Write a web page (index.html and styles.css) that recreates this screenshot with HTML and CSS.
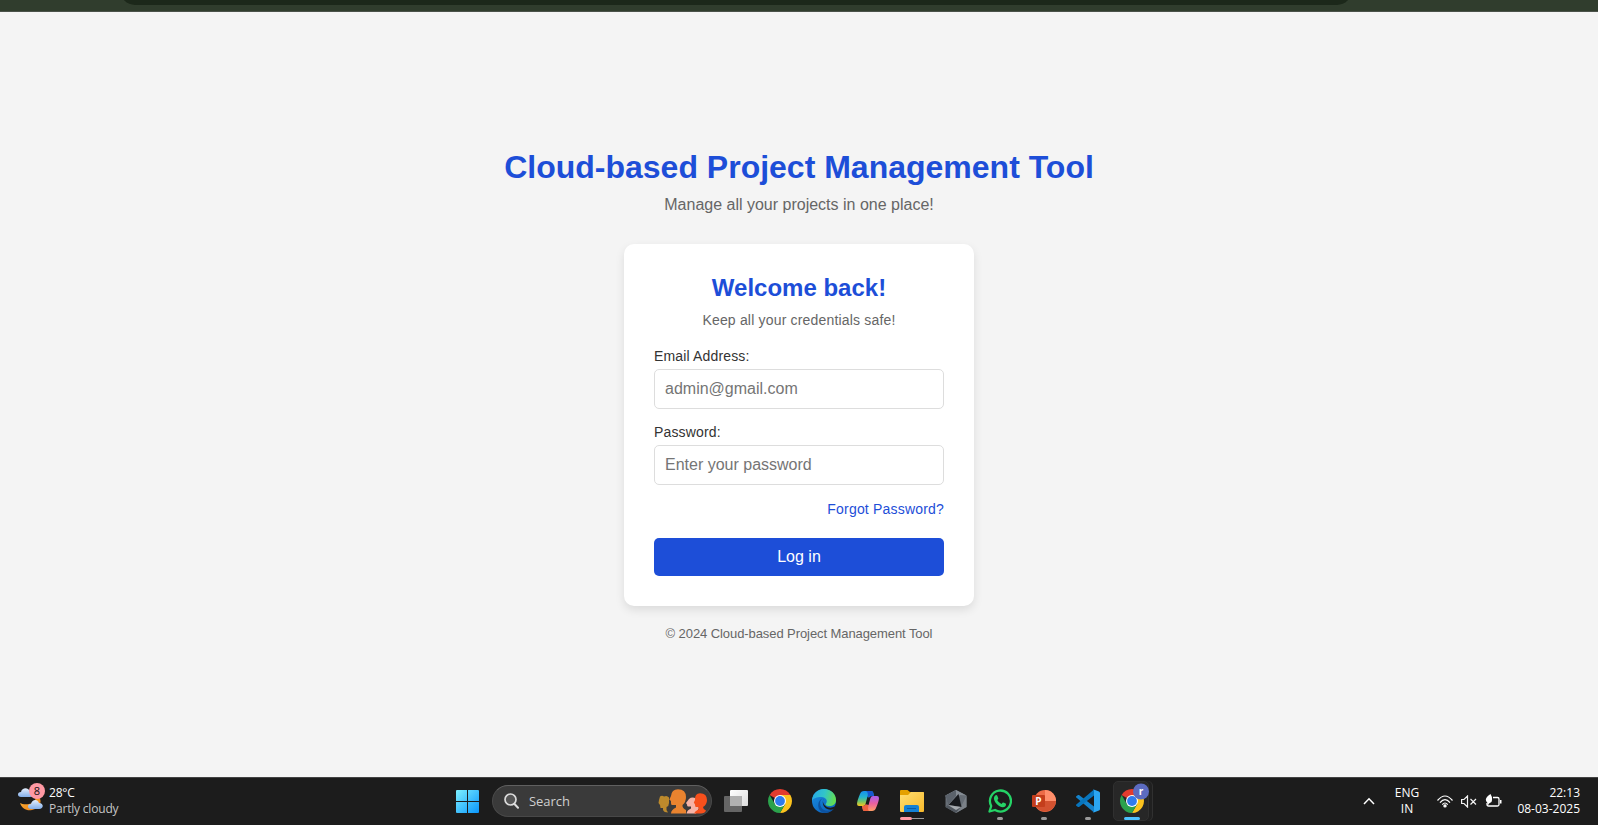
FILE: index.html
```html
<!DOCTYPE html>
<html lang="en">
<head>
<meta charset="utf-8">
<title>Cloud-based Project Management Tool</title>
<link rel="stylesheet" href="styles.css">
</head>
<body>
<div class="browser-strip"><div class="address-bar"></div></div>

<main class="page">
  <h1 class="title">Cloud-based Project Management Tool</h1>
  <p class="subtitle">Manage all your projects in one place!</p>
  <form class="card">
    <h2 class="card-title">Welcome back!</h2>
    <p class="card-subtitle">Keep all your credentials safe!</p>
    <label class="label" for="email">Email Address:</label>
    <input class="input" id="email" type="email" placeholder="admin@gmail.com">
    <label class="label" for="password">Password:</label>
    <input class="input" id="password" type="password" placeholder="Enter your password">
    <a class="forgot">Forgot Password?</a>
    <button class="login" type="button">Log in</button>
  </form>
  <footer class="footer">© 2024 Cloud-based Project Management Tool</footer>
</main>

<div class="taskbar">
  <div class="weather">
    <svg class="weather-icon" width="28" height="30" viewBox="0 0 28 30">
      <defs>
        <linearGradient id="cloud" x1="0" y1="0" x2="0" y2="1"><stop offset="0" stop-color="#e4eefc"/><stop offset="1" stop-color="#82aeea"/></linearGradient>
        <linearGradient id="moon" x1="0" y1="0" x2="1" y2="1"><stop offset="0" stop-color="#f9b33a"/><stop offset="1" stop-color="#f07f13"/></linearGradient>
      </defs>
      <path d="M16 13C19 16 17 20 11 21C7 21.600 4 21 2 20C4 26 9 28 14 27C21 26 25 19 21 14C19 12 17 12 16 13Z" fill="url(#moon)"/>
      <path d="M3 14C-1 14-1 9 3 9C4 4 11 4 12 9C16 9 16 14 12 14Z" fill="url(#cloud)"/>
      <path d="M13 26C9 26 9 21 13 21C14 16 20 16 21 20C26 20 26 26 21 26Z" fill="url(#cloud)"/>
      <circle cx="19" cy="8" r="8" fill="#ff99a4"/>
      <text x="19" y="12" text-anchor="middle" class="weather-count">8</text>
    </svg>
    <div class="weather-text"><span class="temp">28°C</span><span class="sky">Partly cloudy</span></div>
  </div>

  <div class="slot start">
    <svg width="23" height="23" viewBox="0 0 23 23">
      <defs><linearGradient id="win" x1="0" y1="0" x2="1" y2="1"><stop offset="0" stop-color="#7df0ff"/><stop offset="1" stop-color="#0a95fb"/></linearGradient></defs>
      <path fill="url(#win)" d="M1 0H11V11H0V1Q0 0 1 0ZM12 0H22Q23 0 23 1V11H12ZM0 12H11V23H1Q0 23 0 22ZM12 12H23V22Q23 23 22 23H12Z"/>
    </svg>
  </div>
  <div class="search">
    <svg width="15" height="16" viewBox="0 0 15 16" fill="none" stroke="#dcdcdc"><circle cx="6.500" cy="6.500" r="5.500" fill="#555" stroke-width="1.700"/><path d="M10.500 11L14 14.800" stroke-width="2" stroke-linecap="round"/></svg>
    <span class="search-label">Search</span>
    <svg class="people" width="50" height="26" viewBox="0 0 50 26">
      <path fill="#bd8a2c" d="M2 8.500Q4 7 6 8.500Q9 7 11 9.500V15Q11 18 8.500 19V22L10 24.500Q6 24.500 5 22V20H2.500L2 17L0.500 15L1 12Z"/>
      <path fill="#e9832f" d="M20 1.200Q28 1.500 28 9Q28 14 24.500 17Q24 20 28 22V25.500H13Q13 22 18 19.500V17H14Q13 17 13 15V13L11.300 11.500L13 8Q13.500 1.500 20 1.200Z"/>
      <path fill="#f6b3a6" d="M31 11Q34 8.500 38 10.500V16L41 20L38 25.500H28.500Q29 22 33 20.500V18.500H30Q29 18.500 29 16.500L28 15L29.500 13Z"/>
      <path fill="#f7501c" d="M42 5.200Q49 5.500 49 12Q49 16.500 45 19Q45 21 48 22.500Q47 25.500 43 25.500H36Q37 23 40.500 21.500V19H38Q37 19 37 16.500L35.800 14.500L37 12Q36.500 5.500 42 5.200Z"/>
    </svg>
  </div>
  <div class="slot">
    <svg width="24" height="22" viewBox="0 0 24 22">
      <defs><linearGradient id="tv" x1="0" y1="0" x2="1" y2="1"><stop offset="0" stop-color="#fff"/><stop offset="1" stop-color="#dcdcdc"/></linearGradient></defs>
      <rect x="6" width="18" height="16" rx="1" fill="url(#tv)"/><rect y="6" width="18" height="16" rx="1" fill="#656565"/><path d="M6 6H18V16H6Z" fill="#b0b0b0"/>
    </svg>
  </div>
  <div class="slot">
    <svg width="24" height="24" viewBox="0 0 24 24">
      <defs><g id="chrome">
        <path d="M12 12L1.610 6A12 12 0 0 1 22.390 6Z" fill="#e33b2e"/>
        <path d="M12 6H22.390A12 12 0 0 1 12 24L17.200 15Z" fill="#fcc31e"/>
        <path d="M1.610 6A12 12 0 0 0 12 24L17.200 15L12 12L6.800 15Z" fill="#2ba24c"/>
        <circle cx="12" cy="12" r="6" fill="#fff"/><circle cx="12" cy="12" r="4.900" fill="#2f7bee"/>
      </g></defs>
      <use href="#chrome"/>
    </svg>
  </div>
  <div class="slot">
    <svg width="24" height="24" viewBox="0 0 24 24">
      <defs>
        <linearGradient id="e1" x1="0" y1="0.300" x2="1" y2="0.500"><stop offset="0" stop-color="#27a9e8"/><stop offset=".5" stop-color="#32c5c8"/><stop offset="1" stop-color="#66df4b"/></linearGradient>
        <linearGradient id="e2" x1="0" y1="0" x2="0.700" y2="1"><stop offset="0" stop-color="#1b91e2"/><stop offset="1" stop-color="#0b62be"/></linearGradient>
      </defs>
      <circle cx="12" cy="12" r="12" fill="url(#e2)"/>
      <path d="M0 11C1 4 6 0 12 0C19 0 24 5 24 11C24 15 21 17 17.500 17C14 17 13 15.500 14 14.500C16 12 14 8 9.500 8C5 8 1 9 0 12Z" fill="url(#e1)"/>
      <path d="M11 9C7 11 7 18 12 21C16 23 20 21 23 18C21 22 17 24.500 12 24C5 22 4 12 11 9Z" fill="#0d529f"/>
      <path d="M12 9.500C10.500 11 10.500 14 13 16.500C16 19.500 20 19 22.500 17.500C23.500 17 23 18.500 22 19.700C18 22 12 20 11 15C10.500 12.500 11 11 12 9.500Z" fill="#1c1c1c"/>
    </svg>
  </div>
  <div class="slot">
    <svg width="22" height="20" viewBox="0 0 22 20">
      <defs>
        <linearGradient id="c1" x1="0" y1="0" x2="0" y2="1"><stop offset="0" stop-color="#178fee"/><stop offset=".4" stop-color="#22b4cf"/><stop offset=".7" stop-color="#75c566"/><stop offset="1" stop-color="#fbc51b"/></linearGradient>
        <linearGradient id="c2" x1="0" y1="0" x2="0" y2="1"><stop offset="0" stop-color="#a85ff0"/><stop offset=".5" stop-color="#e8609f"/><stop offset="1" stop-color="#ff9e65"/></linearGradient>
      </defs>
      <path d="M10 0H14.500Q15.800 0 16.200 1.500L17 5H14Q12.500 5 12 6.500L10.500 5.500L8.500 13Q8 15 6 15H2Q0 15 0 13Q0 10 3 3Q4 0 7 0Z" fill="url(#c1)"/>
      <path d="M9 0H14.500Q15.800 0 16.200 1.500L17 5H14Q12.500 5 12 6.500L10.500 6Q11.500 1 9 0Z" fill="#1757cf"/>
      <path d="M12 20H7.500Q6.200 20 5.800 18.500L5 15H6Q8 15 8.500 13.500L11.500 14L13.500 7Q14 5 16 5H20Q22 5 22 7Q22 10 19 17Q18 20 15 20Z" fill="url(#c2)"/>
      <path d="M5 15H6Q8 15 8.500 13.500L11.500 14Q10.500 19 12 20H7.500Q6.200 20 5.800 18.500Z" fill="#f0613f"/>
    </svg>
  </div>
  <div class="slot split">
    <svg width="24" height="22" viewBox="0 0 24 22">
      <defs><linearGradient id="fold" x1="0" y1="0" x2="1" y2="1"><stop offset="0" stop-color="#ffdf73"/><stop offset="1" stop-color="#f8b92a"/></linearGradient></defs>
      <path d="M0 1Q0 0 1 0H7.500L10 2H23Q24 2 24 3V8H0Z" fill="#e4a100"/>
      <path d="M0 5H8L11 2H23Q24 2 24 3V21Q24 22 23 22H1Q0 22 0 21Z" fill="url(#fold)"/>
      <path d="M4 22V17Q4 15 6 15H17Q19 15 19 17V22Z" fill="#1381d6"/><path d="M7 18.500H16" stroke="#0a5ba8"/>
    </svg>
  </div>
  <div class="slot">
    <svg width="22" height="23" viewBox="0 0 22 23">
      <path d="M11 0L21.500 5.500V17L11 23L.5 17V5.500Z" fill="#666d75"/><path d="M11 0L21.500 5.500L15 5L3 15L.5 5.500Z" fill="#858c94"/><path d="M11 0V6L3 15L.5 5.500Z" fill="#5b626b"/>
      <path d="M.5 17L3 15L16 17L11 23Z" fill="#50565e"/><path d="M16 17L21.500 5.500V17L11 23Z" fill="#7b8188"/><path d="M13.500 4L16.500 17L3.500 15Z" fill="#17191d"/><path d="M3 15L16 17L11 20Z" fill="#a7abb0"/>
    </svg>
  </div>
  <div class="slot running">
    <svg width="24" height="24" viewBox="0 0 24 24">
      <path d="M1.500 22.500L3.200 17A10.500 10.500 0 1 1 7 21Z" fill="none" stroke="#25d366" stroke-width="2.300" stroke-linejoin="round"/>
      <path d="M7.200 6.500Q8.500 5.500 9.300 6.800L10.300 9.200Q10.400 10 9.200 11.100Q10.600 14 13.500 15.100L14.800 13.500Q15.300 13.200 18 14.700Q18.300 17.800 14.800 18.200C10.500 18 6 13 5.900 9.500Q6 7.500 7.200 6.500Z" fill="#25d366"/>
    </svg>
  </div>
  <div class="slot running">
    <svg width="24" height="22" viewBox="0 0 24 22">
      <circle cx="13" cy="11" r="11" fill="#ed6c47"/><path d="M13 0A11 11 0 0 1 24 11H13Z" fill="#ff8f6b"/><path d="M24 11A11 11 0 0 1 2.600 14L13 11Z" fill="#d35230"/>
      <rect y="5" width="13" height="12" rx="1" fill="#c43e1c"/><text x="6.300" y="15" text-anchor="middle" class="ppt">P</text>
    </svg>
  </div>
  <div class="slot running">
    <svg width="24" height="24" viewBox="0 0 24 24">
      <path d="M0 7.500L2 6Q2.500 5.800 3 6.100L18 17.500V23.500L.3 8.500Q-.3 8 0 7.500Z" fill="#1482cb"/>
      <path d="M0 16.500L2 18Q2.500 18.200 3 17.900L18 6.500V.5L.3 15.500Q-.3 16 0 16.500Z" fill="#0875bd"/>
      <path d="M17 .2L23 2.500Q24 3 24 4V20Q24 21 23 21.500L17 23.800Q18 23 18 22V2Q18 1 17 .2Z" fill="#2ba6f2"/>
    </svg>
  </div>
  <div class="slot active">
    <div class="active-tile">
      <svg width="32" height="32" viewBox="0 0 32 32">
        <use href="#chrome" x="2" y="6"/><circle cx="23" cy="8.500" r="8" fill="#5c6bc0"/><text x="23" y="12" text-anchor="middle" class="profile">r</text>
      </svg>
    </div>
  </div>

  <div class="tray">
    <svg class="chevron" width="12" height="8" viewBox="0 0 12 8" fill="none" stroke="#fff" stroke-width="1.500"><path d="M1 7L6 1.800L11 7"/></svg>
    <div class="lang"><span>ENG</span><span>IN</span></div>
    <div class="status">
      <svg width="16" height="13" viewBox="0 0 16 13" fill="none" stroke="#fff" stroke-width="1.200"><path d="M.5 5.500Q8-3.500 15.500 5.500M3 7.700Q8 1.500 13 7.700M5.300 9.700Q8 6.300 10.700 9.700"/><circle cx="8" cy="10.900" r="1.100" fill="#fff"/></svg>
      <svg width="16" height="13" viewBox="0 0 16 13" fill="none" stroke="#f3f3f3" stroke-width="1.200"><path d="M.6 4.500H3L6.500 1V12L3 8.500H.6ZM9.500 4L15 9.500M15 4L9.500 9.500"/></svg>
      <svg width="17" height="14" viewBox="0 0 17 14"><path d="M8 3.500H12.500Q14 3.500 14 5V10.500Q14 12 12.500 12H3.500Q2 12 2 10.500V9" fill="none" stroke="#fff" stroke-width="1.300"/><path d="M15 6H16.500V9.500H15Z" fill="#fff"/><path d="M5.500 0Q8 4 6.500 8L4 9.500L2.500 12L2.500 9Q-2 5 5.500 0Z" fill="#fff"/></svg>
    </div>
    <div class="clock"><span>22:13</span><span>08-03-2025</span></div>
  </div>
</div>
</body>
</html>
```
FILE: styles.css
```css
* { box-sizing: border-box; }
body {
  margin: 0;
  height: 825px;
  display: flex;
  flex-direction: column;
  overflow: hidden;
  background: #f4f4f4;
  font-family: "Liberation Sans", Arial, sans-serif;
}

.browser-strip {
  height: 12px;
  flex: none;
  overflow: hidden;
  background: #303d2d;
  border-bottom: 1px solid #4b524a;
}
.address-bar {
  width: 1232px;
  height: 34px;
  margin: -29px 0 0 120px;
  border-radius: 15px;
  background: #1c281a;
}

.page {
  flex: 1;
  display: flex;
  flex-direction: column;
  align-items: center;
  padding-top: 137px;
}
.title {
  margin: 0 0 10px;
  font-size: 32px;
  line-height: 36px;
  font-weight: bold;
  color: #1d4ed8;
}
.subtitle {
  margin: 0 0 30px;
  font-size: 16px;
  line-height: 19px;
  color: #666;
}
.card {
  width: 350px;
  height: 362px;
  padding: 30px;
  display: flex;
  flex-direction: column;
  background: #fff;
  border-radius: 10px;
  box-shadow: 0 4px 10px rgba(0, 0, 0, .1);
}
.card-title {
  margin: 0 0 10px;
  font-size: 24px;
  line-height: 28px;
  text-align: center;
  color: #1d4ed8;
}
.card-subtitle {
  margin: 0 0 20px;
  font-size: 14px;
  line-height: 16px;
  letter-spacing: .18px;
  text-align: center;
  color: #666;
}
.label {
  margin-bottom: 5px;
  font-size: 14px;
  line-height: 16px;
  letter-spacing: .15px;
  color: #333;
}
.input {
  width: 100%;
  height: 40px;
  margin: 0 0 15px;
  padding: 10px;
  border: 1px solid #ddd;
  border-radius: 5px;
  font: 16px "Liberation Sans", Arial, sans-serif;
  background: #fff;
}
.input::placeholder { color: #757575; }
.forgot {
  margin: 1px 0 21px;
  font-size: 14px;
  line-height: 16px;
  letter-spacing: .19px;
  text-align: right;
  color: #1d4ed8;
}
.login {
  height: 38px;
  padding: 0;
  border: 0;
  border-radius: 5px;
  background: #1d4ed8;
  color: #fff;
  font: 16px "Liberation Sans", Arial, sans-serif;
}
.footer {
  margin-top: 20px;
  font-size: 13px;
  line-height: 15px;
  letter-spacing: -.08px;
  color: #666;
}

.taskbar {
  flex: none;
  height: 48px;
  padding-bottom: 1px;
  display: flex;
  align-items: center;
  background: #1c1c1c;
  border-top: 1px solid #434343;
  color: #fff;
  font: 12px/16px "Open Sans", "Noto Sans", sans-serif;
}
.weather {
  width: 445px;
  padding-left: 18px;
  display: flex;
  align-items: center;
}
.weather-icon { margin-top: -6px; }
.weather-count { font: 11px "Open Sans", sans-serif; fill: #111; }
.weather-text { display: flex; flex-direction: column; padding-left: 3px; }
.temp { letter-spacing: -.2px; }
.sky { color: #c5c5c5; letter-spacing: -.2px; }

.slot {
  position: relative;
  width: 44px;
  height: 46px;
  flex: none;
  display: flex;
  align-items: center;
  justify-content: center;
}
.slot.start { margin-right: 3px; }
.search {
  width: 220px;
  height: 32px;
  margin-right: 2px;
  padding: 0 3px 0 11px;
  display: flex;
  align-items: center;
  border: 1px solid #484848;
  border-top-color: #606060;
  border-radius: 16px;
  background: #3a3a3a;
}
.search-label { padding-left: 10px; font-size: 13px; letter-spacing: -.05px; color: #cfcfcf; }
.people { margin-left: auto; }

/* Window indicators sit on the lower edge of each app slot. */
.running::after, .active::after {
  content: "";
  position: absolute;
  left: 19px;
  bottom: 4px;
  width: 6px;
  height: 3px;
  border-radius: 2px;
  background: #9a9a9a;
}
.active::after { left: 14px; width: 16px; background: #4cc2ff; }
.split::before {
  content: "";
  position: absolute;
  left: 22px;
  bottom: 5px;
  width: 12px;
  height: 1px;
  background: #9a9a9a;
}
.split::after {
  content: "";
  position: absolute;
  left: 10px;
  bottom: 4px;
  width: 12px;
  height: 3px;
  border-radius: 2px;
  background: #ff99a4;
}
.active-tile {
  width: 36px;
  height: 40px;
  flex: none;
  margin-left: -3px;
  padding: 0 0 0 4px;
  border: 1px solid #303030;
  border-radius: 5px;
  background: #272727;
  box-shadow: 3px 0 0 #202020, 4px 0 0 #303030;
}
.active-tile svg { display: block; margin-top: 1px; }
.ppt { font: bold 10px "Open Sans", sans-serif; fill: #fff; }
.profile { font: bold 10px "Open Sans", sans-serif; fill: #fff; }

.tray {
  margin-left: auto;
  padding-right: 18px;
  display: flex;
  align-items: center;
}
.lang { width: 26px; margin-left: 19px; display: flex; flex-direction: column; align-items: center; }
.status { display: flex; align-items: center; gap: 8px; margin-left: 17px; }
.clock { width: 78px; display: flex; flex-direction: column; align-items: flex-end; }
```
